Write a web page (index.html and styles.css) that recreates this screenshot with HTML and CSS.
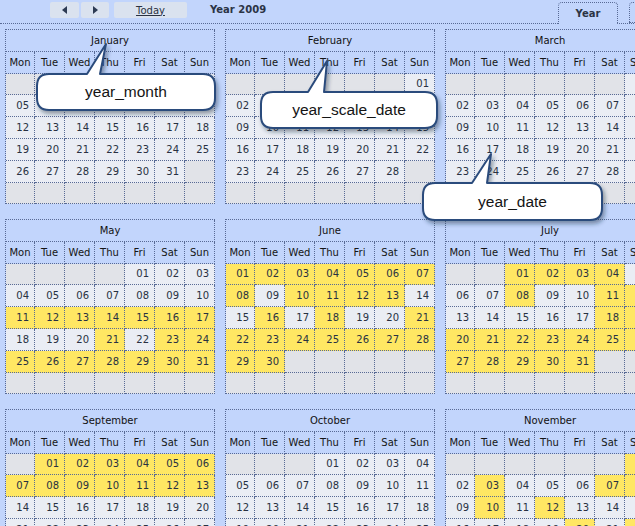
FILE: index.html
```html
<!DOCTYPE html>
<html lang="en">
<head>
<meta charset="utf-8">
<title>Year 2009</title>
<link rel="stylesheet" href="styles.css">
</head>
<body>
<div class="scheduler">
  <div class="nav">
    <div class="btn btn-prev"><span class="arrow arrow-left"></span></div>
    <div class="btn btn-next"><span class="arrow arrow-right"></span></div>
    <div class="btn btn-today">Today</div>
    <div class="date-title">Year 2009</div>
    <div class="tab tab-active">Year</div>
    <div class="tab">Month</div>
  </div>
  <div class="year"></div>
</div>

<svg class="callouts" width="635" height="526" viewBox="0 0 635 526" aria-hidden="true">
  <defs>
    <filter id="shadow" x="-20%" y="-40%" width="140%" height="180%">
      <feDropShadow dx="2" dy="3" stdDeviation="2" flood-color="#1d2a40" flood-opacity="0.45"/>
    </filter>
  </defs>
  <g class="bubble" filter="url(#shadow)">
    <path d="M49,74 H87 L106,44 L100,74 H203 Q215,74 215,86 V98 Q215,110 203,110 H49 Q37,110 37,98 V86 Q37,74 49,74 Z"/>
    <path d="M273,92 H308 L327,61 L324,92 H425 Q437,92 437,104 V116 Q437,128 425,128 H273 Q261,128 261,116 V104 Q261,92 273,92 Z"/>
    <path d="M435,183 H472 L491,154 L487,183 H590 Q602,183 602,195 V208 Q602,220 590,220 H435 Q423,220 423,208 V195 Q423,183 435,183 Z"/>
  </g>
</svg>
<div class="label label-month">year_month</div>
<div class="label label-scale">year_scale_date</div>
<div class="label label-date">year_date</div>

<script src="script.js"></script>
</body>
</html>
```

FILE: styles.css
```css
* { box-sizing: border-box; margin: 0; padding: 0; }
html, body { width: 635px; height: 526px; overflow: hidden; }
body {
  background: #c2d5fc;
  font-family: "DejaVu Sans", Verdana, sans-serif;
  font-size: 10px;
  color: #1c2230;
  position: relative;
}
.scheduler { width: 900px; }

/* navigation bar */
.nav {
  width: 700px;
  height: 24px;
  display: flex;
  align-items: flex-start;
  padding: 2px 11px 0 50px;
  border-bottom: 1px dotted #586a95;
}
.btn {
  height: 16px;
  background: #dae2ef;
  border-radius: 2px;
  display: flex;
  align-items: center;
  justify-content: center;
  color: #2a3142;
}
.btn-prev { width: 29px; }
.btn-next { width: 28px; margin-left: 2px; }
.btn-today { width: 73px; margin-left: 5px; text-decoration: underline; font-size: 10px; }
.arrow { width: 0; height: 0; border-top: 4px solid transparent; border-bottom: 4px solid transparent; }
.arrow-left { border-right: 5px solid #2d3a52; }
.arrow-right { border-left: 5px solid #2d3a52; }
.date-title {
  margin-left: 23px;
  height: 16px;
  line-height: 15px;
  font-weight: bold;
  color: #2b3445;
}
.tab {
  width: 60px;
  height: 21px;
  border: 1px dotted #586a95;
  border-radius: 4px 4px 0 0;
  display: flex;
  align-items: center;
  justify-content: center;
  font-weight: bold;
  color: #2b3445;
  margin-left: 11px;
}
.tab-active {
  margin-left: auto;
  height: 22px;
  border-bottom: none;
  margin-bottom: -1px;
  background: #c2d5fc;
  padding-bottom: 1px;
}

/* year grid */
.year {
  display: grid;
  grid-template-columns: repeat(4, 210px);
  column-gap: 10px;
  row-gap: 15px;
  padding: 5px;
  width: max-content;
}
.month {
  border-left: 1px dotted #586a95;
  border-top: 1px dotted #586a95;
}
.month-title {
  height: 22px;
  line-height: 21px;
  text-align: center;
  border-right: 1px dotted #586a95;
  border-bottom: 1px dotted #586a95;
  color: #111;
}
.week-head, .month-body {
  display: grid;
  grid-template-columns: 29px repeat(6, 30px);
}
.week-head { grid-template-rows: 22px; }
.month-body { grid-template-rows: 21px 22px 22px 22px 22px 21px; }
.head-cell {
  border-right: 1px dotted #586a95;
  border-bottom: 1px dotted #586a95;
  text-align: center;
  line-height: 21px;
  color: #151515;
}
.cell {
  border-right: 1px dotted #586a95;
  border-bottom: 1px dotted #586a95;
  display: flex;
  align-items: center;
  justify-content: flex-end;
  padding-right: 5px;
  padding-bottom: 1px;
  color: #283142;
}
.cell-empty { background: #e1e3e8; }
.cell-day { background: #eaedf4; }
.cell-event { background: #ffe763; }

/* annotation bubbles */
.callouts { position: absolute; left: 0; top: 0; pointer-events: none; }
.bubble path { fill: #ffffff; stroke: #2b4b7c; stroke-width: 2; stroke-linejoin: round; }
.label {
  position: absolute;
  display: flex;
  align-items: center;
  justify-content: center;
  font-family: "Liberation Sans", Arial, sans-serif;
  font-size: 15.5px;
  color: #141414;
}
.label-month { left: 37px; top: 74px; width: 178px; height: 36px; }
.label-scale { left: 261px; top: 92px; width: 176px; height: 36px; }
.label-date { left: 423px; top: 183px; width: 179px; height: 37px; }
```

FILE: script.js
```js
(function () {
  var names = ["January", "February", "March", "April", "May", "June", "July",
    "August", "September", "October", "November", "December"];
  var heads = ["Mon", "Tue", "Wed", "Thu", "Fri", "Sat", "Sun"];
  var events = {
    4: [11, 12, 13, 14, 15, 16, 17, 21, 23, 24, 25, 26, 27, 28, 29, 30, 31],
    5: [1, 2, 3, 4, 5, 6, 7, 8, 10, 11, 12, 13, 16, 18, 21, 22, 23, 24, 25, 26, 27, 28, 29, 30],
    6: [1, 2, 3, 4, 8, 11, 12, 18, 19, 20, 21, 22, 23, 24, 25, 26, 27, 28, 29, 30, 31],
    8: [1, 2, 3, 4, 5, 6, 7, 8, 9, 10, 11, 12, 13],
    10: [1, 3, 7, 8, 10, 12, 20, 22]
  };
  var year = document.querySelector(".year");
  names.forEach(function (name, m) {
    var month = document.createElement("div");
    month.className = "month";
    var title = document.createElement("div");
    title.className = "month-title";
    title.textContent = name;
    month.appendChild(title);
    var head = document.createElement("div");
    head.className = "week-head";
    heads.forEach(function (h) {
      var c = document.createElement("div");
      c.className = "head-cell";
      c.textContent = h;
      head.appendChild(c);
    });
    month.appendChild(head);
    var body = document.createElement("div");
    body.className = "month-body";
    var offset = (new Date(2009, m, 1).getDay() + 6) % 7;
    var count = new Date(2009, m + 1, 0).getDate();
    var ev = events[m] || [];
    for (var i = 0; i < 42; i++) {
      var d = i - offset + 1;
      var cell = document.createElement("div");
      if (d < 1 || d > count) {
        cell.className = "cell cell-empty";
      } else {
        cell.className = "cell " + (ev.indexOf(d) >= 0 ? "cell-event" : "cell-day");
        cell.textContent = (d < 10 ? "0" : "") + d;
      }
      body.appendChild(cell);
    }
    month.appendChild(body);
    year.appendChild(month);
  });
})();
```
